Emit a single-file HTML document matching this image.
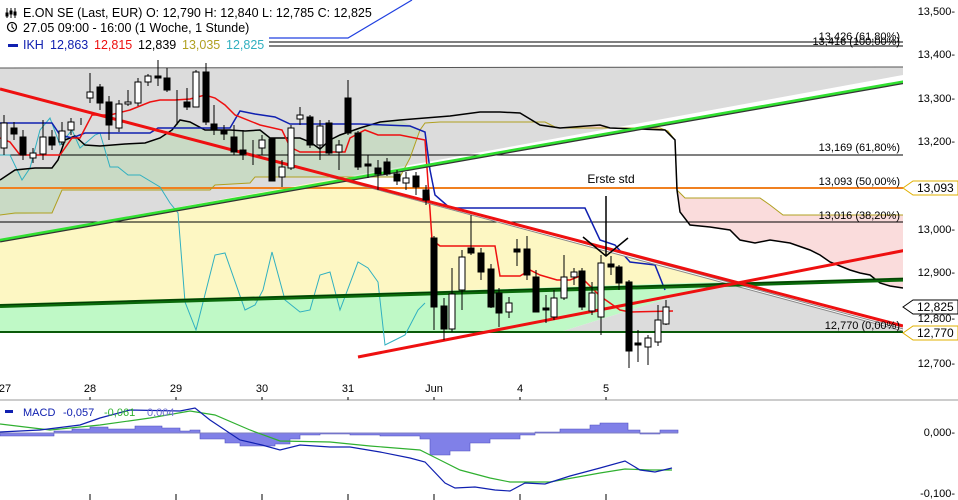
<!DOCTYPE html>
<html><head><meta charset="utf-8"><style>
html,body{margin:0;padding:0;background:#fff;}
svg{display:block;font-family:"Liberation Sans",sans-serif;}
</style></head><body>
<svg width="958" height="500" viewBox="0 0 958 500" xmlns="http://www.w3.org/2000/svg">
<polygon points="0,68 903,67 903,75 0,240" fill="#dcdcdc"/>
<polygon points="0,240 340,178 720,282 0,305" fill="#fdf7c3"/>
<polygon points="0,305 720,282 560,332 0,332" fill="#bff9c6"/>
<polygon points="720,282 903,328 903,332 560,332" fill="#dcdcdc"/>
<polygon points="0,180 15,170 35,168 52,168 58,160 65,140 75,136 85,145 100,146 125,144 145,143 160,138 172,130 180,120 190,122 205,130 230,130 245,131 260,130 270,138 300,138 310,142 320,149 330,140 340,135 360,128 380,122 400,120 420,130 410,158 400,177 255,177 250,183 215,185 210,190 62,190 52,213 0,215" fill="#b9d9b3" opacity="0.55"/>
<polygon points="560,128 600,125 610,128 665,130 675,140 677,190 685,198 760,198 770,205 783,215 903,215 903,288 890,286 880,283 870,275 860,273 850,270 830,262 820,255 810,250 790,243 770,240 755,243 740,240 730,230 710,227 690,225 680,212 677,190 675,140 668,131 660,128" fill="#f9d3d3" opacity="0.8"/>
<line x1="0" y1="68" x2="903" y2="67" stroke="#555" stroke-width="1"/>
<line x1="269" y1="42" x2="903" y2="42" stroke="#000"/>
<line x1="269" y1="46" x2="903" y2="46" stroke="#000"/>
<polyline points="269,38 348,38 412,0" fill="none" stroke="#2040e0" stroke-width="1.2"/>
<line x1="0" y1="155" x2="903" y2="155" stroke="#000"/>
<line x1="0" y1="188" x2="903" y2="188" stroke="#f08020" stroke-width="2"/>
<line x1="0" y1="222" x2="903" y2="222" stroke="#000"/>
<line x1="0" y1="332" x2="903" y2="332" stroke="#0a5a0a" stroke-width="2"/>
<polyline points="0,215 15,213 52,213 62,190 210,190 215,185 250,183 255,177 400,177 410,158 420,130 425,123 440,122 545,122 555,127 560,128 660,128 668,131 675,140 677,190 685,198 760,198 770,205 783,215 903,215" fill="none" stroke="#b0a020" stroke-width="1"/>
<polyline points="0,155 10,155 22,180 30,168 40,130 50,118 60,145 72,130 80,148 95,135 100,133 110,167 118,167 128,175 140,175 160,187 170,203 178,213 185,302 196,330 215,255 225,253 245,310 255,305 263,290 272,252 285,300 300,312 310,310 320,275 330,272 340,310 358,262 368,268 378,282 385,345 395,340 405,335 418,310 425,303" fill="none" stroke="#30b0c0" stroke-width="1"/>
<polyline points="0,180 15,170 35,168 52,168 58,160 65,140 75,136 85,145 100,146 125,144 145,143 160,138 172,130 180,120 190,122 205,130 230,130 245,131 260,130 270,138 300,138 310,142 320,149 330,140 340,135 360,128 380,122 400,120 450,116 480,112 500,112 520,113 540,125 560,128 600,125 610,128 665,130 675,140 677,190 680,212 690,225 710,227 730,230 740,240 755,243 770,240 790,243 810,250 820,255 830,262 850,270 860,273 870,275 880,283 890,286 903,288" fill="none" stroke="#000" stroke-width="1.5"/>
<polyline points="0,123 52,123 60,135 72,138 85,133 150,133 158,128 230,128 240,111 255,114 275,117 290,124 360,124 410,126 425,132 430,170 435,195 450,208 585,208 600,240 615,245 630,262 655,265 665,290" fill="none" stroke="#1020b0" stroke-width="1.5"/>
<polyline points="0,138 10,142 20,155 60,155 72,138 80,138 92,115 110,115 130,110 150,102 160,100 175,100 190,99 205,95 215,98 225,105 235,115 260,125 282,130 290,147 300,152 345,152 350,138 365,130 378,135 400,135 425,140 430,210 432,240 440,246 495,246 500,276 520,276 530,270 540,275 557,280 570,280 580,276 600,296 620,310 630,312 673,311" fill="none" stroke="#ee1010" stroke-width="1.5"/>
<line x1="330" y1="176" x2="903" y2="330" stroke="#888" stroke-width="3"/>
<line x1="330" y1="176" x2="903" y2="330" stroke="#fff" stroke-width="1"/>
<line x1="0" y1="241" x2="958" y2="73" stroke="#333" stroke-width="3"/>
<line x1="0" y1="240" x2="958" y2="72" stroke="#30e030" stroke-width="2.5"/>
<line x1="0" y1="306" x2="958" y2="278" stroke="#0a6a0a" stroke-width="4"/>
<line x1="0" y1="305" x2="958" y2="277" stroke="#000" stroke-width="1" opacity="0.5"/>
<line x1="0" y1="89" x2="903" y2="326" stroke="#ee1010" stroke-width="3"/>
<line x1="358" y1="357" x2="958" y2="240" stroke="#ee1010" stroke-width="3"/>
<g stroke="#000" stroke-width="1">
<line x1="4" y1="115" x2="4" y2="155"/><rect x="1" y="123" width="6" height="25" fill="#fff"/>
<line x1="14" y1="122" x2="14" y2="140"/><rect x="11" y="128" width="6" height="6" fill="#000"/>
<line x1="23" y1="130" x2="23" y2="160"/><rect x="20" y="137" width="6" height="18" fill="#000"/>
<line x1="33" y1="148" x2="33" y2="163"/><rect x="30" y="153" width="6" height="5" fill="#fff"/>
<line x1="43" y1="120" x2="43" y2="160"/><rect x="40" y="137" width="6" height="17" fill="#fff"/>
<line x1="52" y1="130" x2="52" y2="150"/><rect x="49" y="137" width="6" height="8" fill="#000"/>
<line x1="62" y1="122" x2="62" y2="145"/><rect x="59" y="131" width="6" height="11" fill="#fff"/>
<line x1="71" y1="118" x2="71" y2="135"/><rect x="68" y="122" width="6" height="8" fill="#fff"/>
<line x1="81" y1="118" x2="81" y2="125"/>
<line x1="90" y1="73" x2="90" y2="103"/><rect x="87" y="92" width="6" height="6" fill="#fff"/>
<line x1="100" y1="84" x2="100" y2="110"/><rect x="97" y="87" width="6" height="16" fill="#000"/>
<line x1="109" y1="96" x2="109" y2="140"/><rect x="106" y="102" width="6" height="23" fill="#000"/>
<line x1="119" y1="100" x2="119" y2="132"/><rect x="116" y="104" width="6" height="24" fill="#fff"/>
<line x1="128" y1="90" x2="128" y2="106"/><rect x="125" y="102" width="6" height="2" fill="#fff"/>
<line x1="138" y1="78" x2="138" y2="106"/><rect x="135" y="82" width="6" height="21" fill="#fff"/>
<line x1="148" y1="74" x2="148" y2="86"/><rect x="145" y="76" width="6" height="6" fill="#fff"/>
<line x1="158" y1="60" x2="158" y2="86"/><rect x="155" y="76" width="6" height="2" fill="#000"/>
<line x1="167" y1="68" x2="167" y2="92"/><rect x="164" y="78" width="6" height="12" fill="#000"/>
<line x1="177" y1="90" x2="177" y2="125"/>
<line x1="187" y1="88" x2="187" y2="110"/><rect x="184" y="102" width="6" height="5" fill="#000"/>
<line x1="196" y1="70" x2="196" y2="107"/><rect x="193" y="72" width="6" height="35" fill="#fff"/>
<line x1="206" y1="63" x2="206" y2="125"/><rect x="203" y="72" width="6" height="50" fill="#000"/>
<line x1="214" y1="105" x2="214" y2="135"/><rect x="211" y="124" width="6" height="6" fill="#000"/>
<line x1="224" y1="125" x2="224" y2="140"/><rect x="221" y="130" width="6" height="4" fill="#000"/>
<line x1="234" y1="125" x2="234" y2="155"/><rect x="231" y="137" width="6" height="15" fill="#000"/>
<line x1="243" y1="130" x2="243" y2="160"/><rect x="240" y="150" width="6" height="4" fill="#000"/>
<line x1="253" y1="140" x2="253" y2="165"/>
<line x1="262" y1="135" x2="262" y2="155"/><rect x="259" y="140" width="6" height="8" fill="#fff"/>
<line x1="272" y1="138" x2="272" y2="181"/><rect x="269" y="139" width="6" height="42" fill="#000"/>
<line x1="282" y1="160" x2="282" y2="187"/><rect x="279" y="167" width="6" height="10" fill="#fff"/>
<line x1="291" y1="125" x2="291" y2="170"/><rect x="288" y="128" width="6" height="40" fill="#fff"/>
<line x1="300" y1="107" x2="300" y2="125"/><rect x="297" y="115" width="6" height="4" fill="#fff"/>
<line x1="310" y1="115" x2="310" y2="148"/><rect x="307" y="117" width="6" height="28" fill="#000"/>
<line x1="320" y1="120" x2="320" y2="160"/><rect x="317" y="126" width="6" height="19" fill="#fff"/>
<line x1="329" y1="120" x2="329" y2="155"/><rect x="326" y="123" width="6" height="30" fill="#000"/>
<line x1="339" y1="140" x2="339" y2="170"/><rect x="336" y="145" width="6" height="7" fill="#fff"/>
<line x1="348" y1="80" x2="348" y2="135"/><rect x="345" y="98" width="6" height="35" fill="#000"/>
<line x1="358" y1="131" x2="358" y2="170"/><rect x="355" y="133" width="6" height="34" fill="#000"/>
<line x1="368" y1="155" x2="368" y2="178"/><rect x="365" y="164" width="6" height="2" fill="#000"/>
<line x1="378" y1="160" x2="378" y2="190"/><rect x="375" y="168" width="6" height="6" fill="#000"/>
<line x1="387" y1="158" x2="387" y2="176"/><rect x="384" y="162" width="6" height="12" fill="#000"/>
<line x1="397" y1="170" x2="397" y2="185"/><rect x="394" y="174" width="6" height="7" fill="#000"/>
<line x1="406" y1="172" x2="406" y2="190"/><rect x="403" y="178" width="6" height="5" fill="#fff"/>
<line x1="416" y1="172" x2="416" y2="195"/><rect x="413" y="176" width="6" height="11" fill="#000"/>
<line x1="426" y1="185" x2="426" y2="205"/><rect x="423" y="190" width="6" height="10" fill="#000"/>
<line x1="434" y1="236" x2="434" y2="330"/><rect x="431" y="238" width="6" height="69" fill="#000"/>
<line x1="444" y1="298" x2="444" y2="340"/><rect x="441" y="306" width="6" height="23" fill="#000"/>
<line x1="452" y1="268" x2="452" y2="332"/><rect x="449" y="294" width="6" height="35" fill="#fff"/>
<line x1="462" y1="250" x2="462" y2="310"/><rect x="459" y="257" width="6" height="33" fill="#fff"/>
<line x1="471" y1="215" x2="471" y2="255"/><rect x="468" y="248" width="6" height="5" fill="#000"/>
<line x1="481" y1="248" x2="481" y2="280"/><rect x="478" y="253" width="6" height="19" fill="#000"/>
<line x1="491" y1="264" x2="491" y2="308"/><rect x="488" y="269" width="6" height="38" fill="#000"/>
<line x1="499" y1="288" x2="499" y2="327"/><rect x="496" y="293" width="6" height="20" fill="#000"/>
<line x1="509" y1="297" x2="509" y2="318"/><rect x="506" y="303" width="6" height="9" fill="#fff"/>
<line x1="517" y1="239" x2="517" y2="266"/><rect x="514" y="249" width="6" height="3" fill="#000"/>
<line x1="527" y1="236" x2="527" y2="280"/><rect x="524" y="249" width="6" height="26" fill="#000"/>
<line x1="536" y1="270" x2="536" y2="312"/><rect x="533" y="277" width="6" height="35" fill="#000"/>
<line x1="546" y1="295" x2="546" y2="323"/><rect x="543" y="308" width="6" height="2" fill="#000"/>
<line x1="554" y1="290" x2="554" y2="320"/><rect x="551" y="298" width="6" height="19" fill="#fff"/>
<line x1="564" y1="255" x2="564" y2="300"/><rect x="561" y="277" width="6" height="21" fill="#fff"/>
<line x1="574" y1="268" x2="574" y2="285"/><rect x="571" y="272" width="6" height="5" fill="#fff"/>
<line x1="582" y1="268" x2="582" y2="310"/><rect x="579" y="271" width="6" height="36" fill="#000"/>
<line x1="592" y1="282" x2="592" y2="315"/><rect x="589" y="293" width="6" height="18" fill="#fff"/>
<line x1="601" y1="255" x2="601" y2="335"/><rect x="598" y="263" width="6" height="54" fill="#fff"/>
<line x1="611" y1="256" x2="611" y2="275"/><rect x="608" y="264" width="6" height="3" fill="#000"/>
<line x1="619" y1="265" x2="619" y2="290"/><rect x="616" y="267" width="6" height="16" fill="#000"/>
<line x1="629" y1="280" x2="629" y2="368"/><rect x="626" y="282" width="6" height="69" fill="#000"/>
<line x1="638" y1="330" x2="638" y2="362"/><rect x="635" y="343" width="6" height="2" fill="#000"/>
<line x1="648" y1="335" x2="648" y2="365"/><rect x="645" y="338" width="6" height="9" fill="#fff"/>
<line x1="658" y1="305" x2="658" y2="346"/><rect x="655" y="320" width="6" height="22" fill="#fff"/>
<line x1="666" y1="300" x2="666" y2="325"/><rect x="663" y="307" width="6" height="17" fill="#fff"/>
</g>
<text x="611" y="183" font-size="12" text-anchor="middle" fill="#000">Erste std</text>
<line x1="606" y1="196" x2="606" y2="256" stroke="#000" stroke-width="1.5"/>
<polyline points="583,237 606,256 628,238" fill="none" stroke="#000" stroke-width="1.5"/>
<g font-size="11" fill="#000" text-anchor="end">
<text x="900" y="40">13,426 (61,80%)</text>
<text x="900" y="45">13,416 (100,00%)</text>
<text x="900" y="151">13,169 (61,80%)</text>
<text x="900" y="185">13,093 (50,00%)</text>
<text x="900" y="219">13,016 (38,20%)</text>
<text x="900" y="329">12,770 (0,00%)</text>
</g>
<rect x="903" y="0" width="55" height="500" fill="#fff"/>
<g font-size="11" fill="#000" text-anchor="end">
<text x="955" y="15">13,500-</text>
<text x="955" y="58">13,400-</text>
<text x="955" y="102">13,300-</text>
<text x="955" y="145">13,200-</text>
<text x="955" y="233">13,000-</text>
<text x="955" y="276">12,900-</text>
<text x="955" y="322">12,800-</text>
<text x="955" y="367">12,700-</text>
</g>
<polygon points="903,188 913,181 958,181 958,195 913,195" fill="#fff" stroke="#e0b000"/>
<text x="917" y="192" font-size="12">13,093</text>
<polygon points="903,307 913,300 958,300 958,314 913,314" fill="#fff" stroke="#000"/>
<text x="917" y="311" font-size="12">12,825</text>
<polygon points="903,333 913,326 958,326 958,340 913,340" fill="#fff" stroke="#e0b000"/>
<text x="917" y="337" font-size="12">12,770</text>
<g font-size="12.5" fill="#000">
<g stroke="#000" stroke-width="1"><line x1="7" y1="8" x2="7" y2="18"/><line x1="11" y1="8" x2="11" y2="18"/><line x1="15" y1="8" x2="15" y2="18"/><rect x="6" y="13" width="2" height="3"/><rect x="10" y="11" width="2" height="3"/><rect x="14" y="12" width="2" height="3"/></g>
<text x="23" y="17">E.ON SE (Last, EUR)  O: 12,790  H: 12,840  L: 12,785  C: 12,825</text>
<circle cx="12" cy="27" r="4.5" fill="none" stroke="#000" stroke-width="1.2"/><polyline points="12,24 12,27 14,29" fill="none" stroke="#000"/>
<text x="23" y="32">27.05 09:00 - 16:00 (1 Woche, 1 Stunde)</text>
<rect x="8" y="44" width="10" height="3" fill="#1020b0"/>
<text x="23" y="49" fill="#1020b0">IKH</text>
<text x="50" y="49" fill="#1020b0">12,863</text>
<text x="94" y="49" fill="#ee1010">12,815</text>
<text x="138" y="49">12,839</text>
<text x="182" y="49" fill="#b0a020">13,035</text>
<text x="226" y="49" fill="#30b0c0">12,825</text>
</g>
<g font-size="11" fill="#000" text-anchor="middle">
<text x="5" y="392">27</text><text x="90" y="392">28</text><text x="176" y="392">29</text><text x="262" y="392">30</text><text x="348" y="392">31</text><text x="434" y="392">Jun</text><text x="520" y="392">4</text><text x="606" y="392">5</text>
</g>
<line x1="0" y1="400" x2="958" y2="400" stroke="#999"/>
<g stroke="#000"><line x1="90" y1="397" x2="90" y2="400"/><line x1="176" y1="397" x2="176" y2="400"/><line x1="262" y1="397" x2="262" y2="400"/><line x1="348" y1="397" x2="348" y2="400"/><line x1="434" y1="397" x2="434" y2="400"/><line x1="520" y1="397" x2="520" y2="400"/><line x1="606" y1="397" x2="606" y2="400"/>
<line x1="90" y1="494" x2="90" y2="500"/><line x1="176" y1="494" x2="176" y2="500"/><line x1="262" y1="494" x2="262" y2="500"/><line x1="348" y1="494" x2="348" y2="500"/><line x1="434" y1="494" x2="434" y2="500"/><line x1="520" y1="494" x2="520" y2="500"/><line x1="606" y1="494" x2="606" y2="500"/></g>
<path d="M0,433 V436 H54 V431 H72 V429 H90 V427 H108 V429 H135 V426 H162 V428 H180 V431 H190 V430 H200 V439 H225 V443 H240 V446 H275 V444 H290 V439 H300 V435 H320 V434 H350 V435 H380 V436 H420 V439 H430 V455 H450 V451 H470 V443 H490 V439 H520 V435 H535 V432 H560 V429 H590 V425 H600 V423 H628 V430 H640 V434 H660 V430 H678 V433 Z" fill="#8080e8" stroke="#5050c0" stroke-width="0.6"/>
<line x1="0" y1="433" x2="678" y2="433" stroke="#8080c0"/>
<polyline points="0,424 50,430 100,425 150,418 190,411 215,415 250,430 280,441 330,442 370,446 420,450 440,460 460,470 490,478 510,482 550,482 600,473 625,469 650,470 672,470" fill="none" stroke="#30b030" stroke-width="1.2"/>
<polyline points="0,432 40,430 80,425 100,418 130,410 180,411 195,408 210,420 240,440 262,445 280,450 300,445 330,447 350,447 380,452 410,458 425,462 445,483 455,488 475,487 495,490 510,491 525,483 545,484 570,476 600,468 625,461 640,470 655,472 672,468" fill="none" stroke="#1020b0" stroke-width="1.2"/>
<rect x="5" y="410" width="8" height="3" fill="#1020b0"/>
<g font-size="11"><text x="23" y="416" fill="#1020b0">MACD</text><text x="63" y="416" fill="#1020b0">-0,057</text><text x="104" y="416" fill="#30b030">-0,061</text><text x="147" y="416" fill="#7070d0">0,004</text></g>
<g font-size="11" text-anchor="end"><text x="955" y="436">0,000-</text><text x="955" y="497">-0,100-</text></g>
</svg>
</body></html>
